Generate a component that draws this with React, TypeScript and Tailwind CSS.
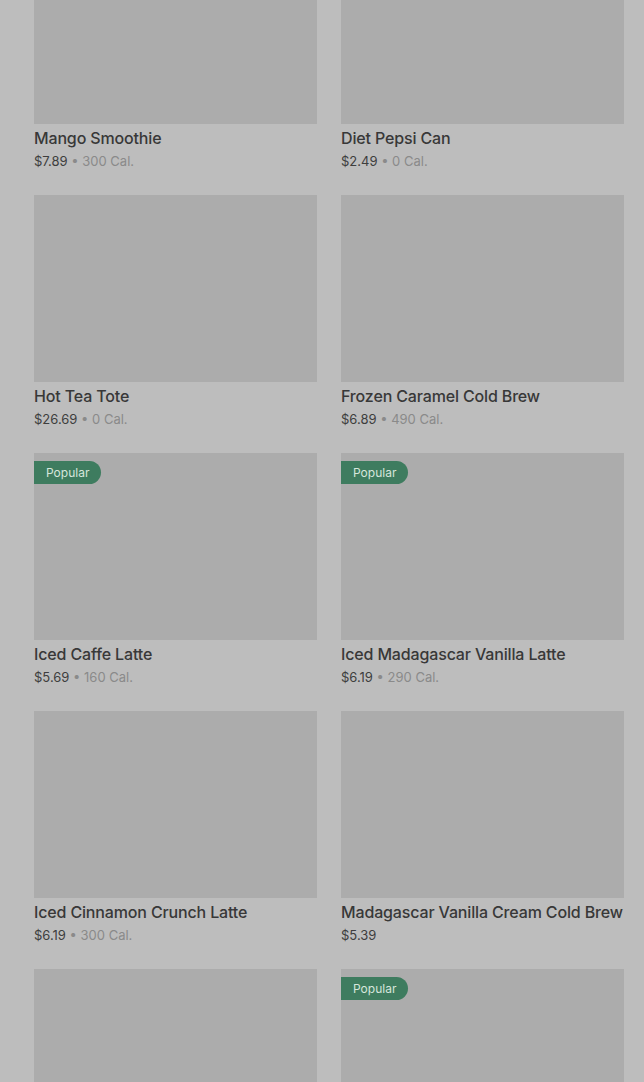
type Item = {
  name?: string;
  price?: string;
  cal?: string;
  popular?: boolean;
};

const items: Item[] = [
  { name: "Mango Smoothie", price: "$7.89", cal: "300 Cal." },
  { name: "Diet Pepsi Can", price: "$2.49", cal: "0 Cal." },
  { name: "Hot Tea Tote", price: "$26.69", cal: "0 Cal." },
  { name: "Frozen Caramel Cold Brew", price: "$6.89", cal: "490 Cal." },
  { name: "Iced Caffe Latte", price: "$5.69", cal: "160 Cal.", popular: true },
  { name: "Iced Madagascar Vanilla Latte", price: "$6.19", cal: "290 Cal.", popular: true },
  { name: "Iced Cinnamon Crunch Latte", price: "$6.19", cal: "300 Cal." },
  { name: "Madagascar Vanilla Cream Cold Brew", price: "$5.39" },
  // last row: only the pictures are on screen
  {},
  { popular: true },
];

function Card({ item }: { item: Item }) {
  return (
    <div className="flex flex-col">
      <div className="relative h-[187px] bg-[#acacac]">
        {item.popular && (
          <span className="absolute left-0 top-2 flex h-[23px] items-center rounded-r-full bg-[#3e7c5f] pl-3 pr-3 text-[12px] text-[#d6e6dc]">
            Popular
          </span>
        )}
      </div>
      {item.name && (
        <>
          <div className="mt-[4px] whitespace-nowrap text-[16px] leading-5 font-medium tracking-[-0.15px] text-[#383838]">
            {item.name}
          </div>
          <div className="mt-[4px] text-[13px] leading-[18px] text-[#3e3e3e]">
            {item.price}
            {item.cal && <span className="text-[#8a8a8a]"> • {item.cal}</span>}
          </div>
        </>
      )}
    </div>
  );
}

export default function App() {
  return (
    <div className="h-[1082px] overflow-hidden bg-[#bdbdbd] font-['Inter',sans-serif]">
      <div className="-mt-[63px] grid grid-cols-2 gap-x-6 gap-y-[25px] pl-[34px] pr-[20px]">
        {items.map((item, i) => (
          <Card key={i} item={item} />
        ))}
      </div>
    </div>
  );
}
